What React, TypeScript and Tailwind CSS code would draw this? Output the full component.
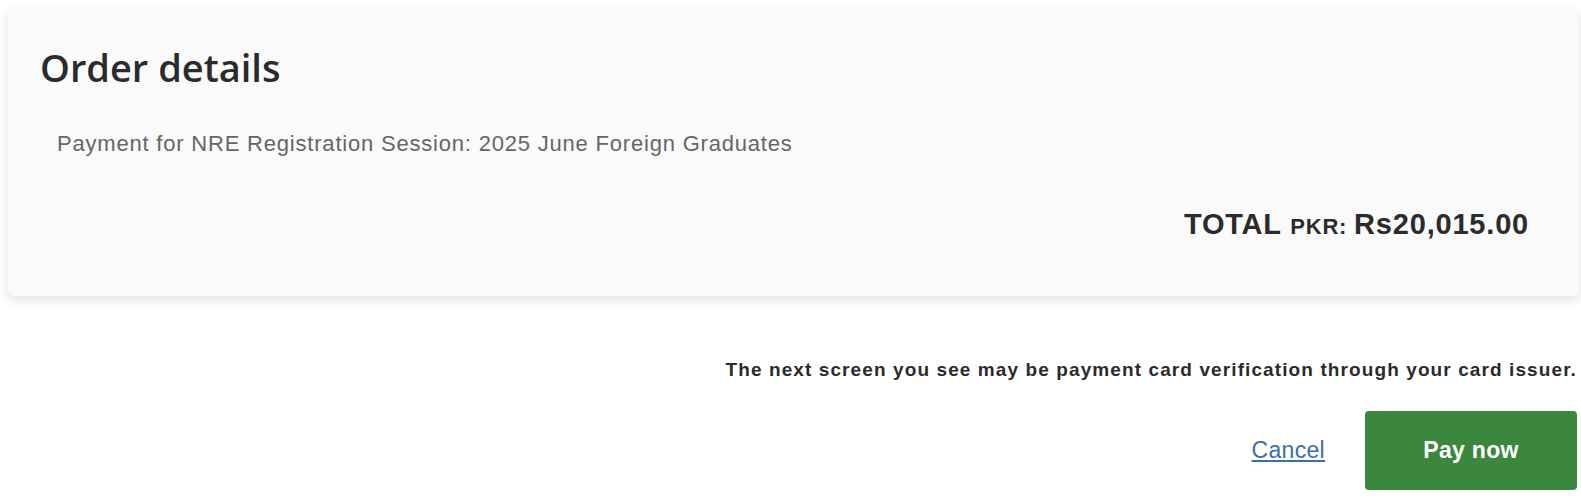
export default function App() {
  return (
    <div className="h-[496px] w-full overflow-hidden bg-white pl-2 pr-[2px] pt-2 font-['Liberation_Sans',Arial,sans-serif]">
      {/* Order card */}
      <div className="h-[288px] rounded-md bg-[#fafafa] shadow-[0_4px_12px_rgba(0,0,0,0.12)] pl-8 pr-[50px] pt-[34px]">
        <h2 className="font-['Open_Sans',sans-serif] text-[38px] font-semibold leading-[50px] text-[#2b2b2b]">
          Order details
        </h2>
        <p className="mt-[40px] pl-[17px] text-[22px] leading-6 tracking-[0.8px] text-[#666]">
          Payment for NRE Registration Session: 2025 June Foreign Graduates
        </p>
        <div className="mt-[52px] text-right font-bold leading-8 tracking-[0.8px] text-[#2b2b2b]">
          <span className="text-[29px]">TOTAL </span>
          <span className="text-[22px]">PKR: </span>
          <span className="text-[29px]">Rs20,015.00</span>
        </div>
      </div>

      {/* Footer */}
      <div className="flex flex-col items-end pr-[2px]">
        <p className="mt-[62px] text-[19px] font-bold leading-6 tracking-[1.1px] text-[#2b2b2b]">
          The next screen you see may be payment card verification through your card issuer.
        </p>
        <div className="mt-[29px] flex items-center gap-10">
          <a href="#" className="text-[23px] tracking-[0.3px] text-[#3a70a8] underline underline-offset-2">
            Cancel
          </a>
          <button className="h-[79px] w-[212px] rounded bg-[#3b873d] text-[23px] font-bold tracking-[0.3px] text-white">
            Pay now
          </button>
        </div>
      </div>
    </div>
  );
}
